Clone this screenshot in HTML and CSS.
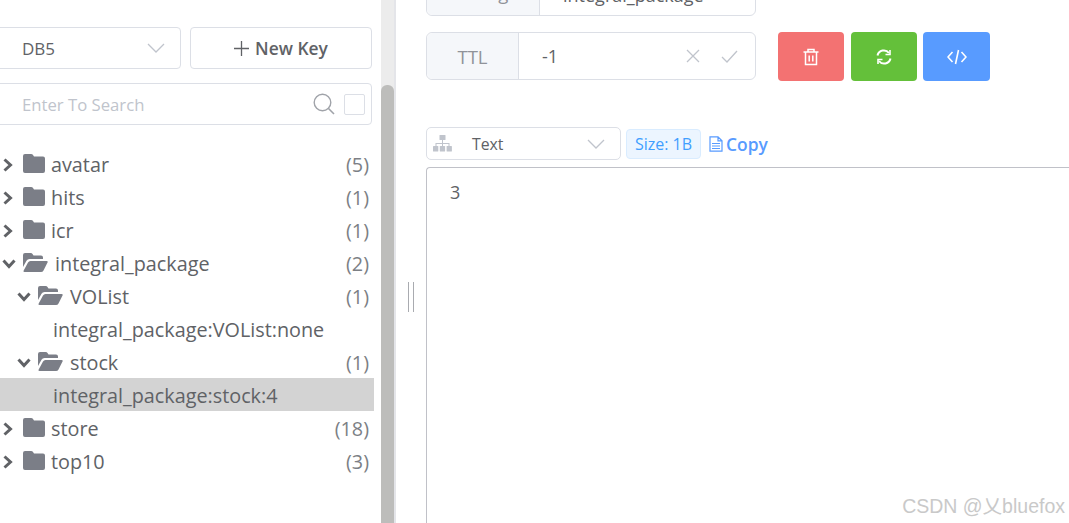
FILE: index.html
```html
<!DOCTYPE html>
<html lang="en">
<head>
  <meta charset="UTF-8">
  <title>Redis Key</title>
  <link rel="stylesheet" href="styles.css">
</head>
<body>

<svg class="icon-defs" width="0" height="0">
  <symbol id="folder" viewBox="0 0 22 19">
    <path d="M2 0h6q1.500 0 2.200 1.200l.8 1.300h9q2 0 2 2v12.500q0 2-2 2h-18q-2 0-2-2v-15q0-2 2-2z"/>
  </symbol>
  <symbol id="folder-open" viewBox="0 0 25 19">
    <path d="M0 2q0-2 2-2h5.500q1.500 0 2.200 1.200l.8 1.300h7.500q2 0 2 2v1.500h-13.500q-2 0-3 1.700l-3.500 6.300z"/>
    <path d="M6 8h17.500q1.800 0 1 1.600l-4 7.800q-.8 1.600-2.500 1.600h-16.500q-1.600 0-.8-1.500l4.300-8q.8-1.500 2.500-1.500z"/>
  </symbol>
  <symbol id="arrow-right" viewBox="0 0 12 14">
    <path d="M2.500 1.500l6 5.500-6 5.500" fill="none" stroke="currentColor" stroke-width="3"/>
  </symbol>
  <symbol id="arrow-down" viewBox="0 0 14 12">
    <path d="M1.500 2.500l5.500 6 5.500-6" fill="none" stroke="currentColor" stroke-width="3"/>
  </symbol>
  <symbol id="caret" viewBox="0 0 18 10">
    <path d="M1 1l8 8 8-8" fill="none" stroke="currentColor" stroke-width="1.300"/>
  </symbol>
</svg>

<div class="app">
  <aside class="sidebar">
    <div class="side-top">
      <div class="db-row">
        <div class="db-select">
          <span>DB5</span>
          <svg class="caret" width="18" height="10"><use href="#caret"/></svg>
        </div>
        <button class="new-key">
          <svg class="plus" width="15" height="15" viewBox="0 0 15 15">
            <path d="M7.500 0v15M0 7.500h15" stroke="currentColor" stroke-width="1.300"/>
          </svg>
          New Key
        </button>
      </div>
      <div class="search-box">
        <span class="search-hint">Enter To Search</span>
        <svg class="search-icon" width="22" height="22" viewBox="0 0 22 22">
          <circle cx="9.500" cy="9.500" r="8.300" fill="none" stroke="currentColor" stroke-width="1.400"/>
          <path d="M15.500 15.500l5.500 5.500" stroke="currentColor" stroke-width="1.600"/>
        </svg>
        <span class="checkbox"></span>
      </div>
    </div>

    <ul class="tree" id="tree"></ul>
  </aside>

  <div class="scroll-track"><div class="scroll-thumb"></div></div>

  <main class="detail">
    <div class="resizer"></div>
    <div class="panel">
      <div class="key-row">
        <div class="input-group name-group">
          <span class="prefix type-label">String</span>
          <span class="input-value name-value">integral_package</span>
        </div>
      </div>

      <div class="ttl-row">
        <div class="input-group ttl-group">
          <span class="prefix ttl-label">TTL</span>
          <span class="input-value ttl-value">-1</span>
          <svg class="ttl-icon" width="14" height="14" viewBox="0 0 14 14">
            <path d="M1 1l12 12M13 1l-12 12" stroke="currentColor" stroke-width="1.300"/>
          </svg>
          <svg class="ttl-icon ttl-check" width="17" height="13" viewBox="0 0 17 13">
            <path d="M1 7l5 5 10-11" fill="none" stroke="currentColor" stroke-width="1.300"/>
          </svg>
        </div>
        <div class="actions">
          <button class="act act-red">
            <svg width="18" height="18" viewBox="0 0 18 18" fill="none" stroke="#fff" stroke-width="1.500">
              <path d="M1.500 4h15M6 4v-2.500h6v2.500M3.500 4v12.500h11v-12.500M7.200 7.500v6M10.800 7.500v6"/>
            </svg>
          </button>
          <button class="act act-green">
            <svg width="16" height="16" viewBox="0 0 16 16" fill="none" stroke="#fff" stroke-width="2">
              <path d="M1.500 6.500a6.500 6.500 0 0 1 11.500-2.500M14.500 9.500a6.500 6.500 0 0 1-11.500 2.500"/>
              <path d="M14 1v4.500h-4.500M2 15v-4.500h4.500" stroke-width="1.600"/>
            </svg>
          </button>
          <button class="act act-blue">
            <svg width="20" height="16" viewBox="0 0 20 16" fill="none" stroke="#fff" stroke-width="1.600">
              <path d="M5.500 3l-4.500 5 4.500 5M14.500 3l4.500 5-4.500 5M11.500 1l-3 14"/>
            </svg>
          </button>
        </div>
      </div>

      <div class="format-row">
        <div class="format-select">
          <svg class="tree-icon" width="19" height="17" viewBox="0 0 19 17">
            <rect x="6.500" y="0" width="6" height="5" rx=".6"/>
            <path d="M9 5h1v3h6.500v3h-1v-2h-5.500v2h-1v-2h-5.500v2h-1v-3h6.500z"/>
            <rect x="0" y="11" width="5.300" height="5.500" rx=".6"/>
            <rect x="6.800" y="11" width="5.300" height="5.500" rx=".6"/>
            <rect x="13.600" y="11" width="5.300" height="5.500" rx=".6"/>
          </svg>
          <span class="format-name">Text</span>
          <svg class="caret" width="18" height="10"><use href="#caret"/></svg>
        </div>
        <span class="size-tag">Size: 1B</span>
        <span class="copy">
          <svg width="14" height="16" viewBox="0 0 14 16" fill="none" stroke="currentColor" stroke-width="1.200">
            <path d="M1 .8h8l4 4v10.400h-12zM9 .8v4h4M3 7.500h8M3 10h8M3 12.500h8"/>
          </svg>Copy
        </span>
      </div>

      <div class="value-box">3</div>
    </div>
  </main>
</div>

<div class="watermark">CSDN @乂bluefox</div>

<script>
  const rows = [
    { name: "avatar", count: 5, type: "closed", level: 0 },
    { name: "hits", count: 1, type: "closed", level: 0 },
    { name: "icr", count: 1, type: "closed", level: 0 },
    { name: "integral_package", count: 2, type: "open", level: 0 },
    { name: "VOList", count: 1, type: "open", level: 1 },
    { name: "integral_package:VOList:none", type: "leaf" },
    { name: "stock", count: 1, type: "open", level: 1 },
    { name: "integral_package:stock:4", type: "leaf", selected: true },
    { name: "store", count: 18, type: "closed", level: 0 },
    { name: "top10", count: 3, type: "closed", level: 0 }
  ];

  const tree = document.getElementById("tree");
  rows.forEach(item => {
    const row = document.createElement("li");
    row.className = `row row-${item.type} level-${item.level || 0}`;
    if (item.selected) row.classList.add("selected");

    if (item.type === "leaf") {
      row.innerHTML = `<span class="row-name">${item.name}</span>`;
    } else {
      const open = item.type === "open";
      row.innerHTML = `
        <svg class="${open ? "arrow-down" : "arrow-right"}"><use href="#${open ? "arrow-down" : "arrow-right"}"/></svg>
        <svg class="${open ? "folder-open" : "folder"}"><use href="#${open ? "folder-open" : "folder"}"/></svg>
        <span class="row-name">${item.name}</span>
        <span class="row-count">(${item.count})</span>
      `;
    }
    tree.appendChild(row);
  });
</script>

</body>
</html>
```

FILE: styles.css
```css
* {
  box-sizing: border-box;
}
html, body {
  margin: 0;
  height: 100%;
  overflow: hidden;
}
body {
  font-family: 'Open Sans', 'Noto Sans', sans-serif;
  color: #606266;
  background-color: #fff;
}
.icon-defs {
  position: absolute;
}
.app {
  display: flex;
  height: 523px;
  overflow: hidden;
}

/* left side */
.sidebar {
  width: 381px;
  flex: none;
  padding-top: 27px;
  overflow: hidden;
}
.side-top {
  margin-left: -10px;
  width: 382px;
}
.db-row {
  display: flex;
  gap: 9px;
}
.db-select {
  width: 191px;
  height: 42px;
  border: 1px solid #dcdfe6;
  border-radius: 4px;
  display: flex;
  align-items: center;
  justify-content: space-between;
  padding: 0 15px 0 31px;
  font-size: 17px;
}
.caret {
  color: #c0c4cc;
}
.new-key {
  width: 182px;
  height: 42px;
  background: #fff;
  border: 1px solid #dcdfe6;
  border-radius: 4px;
  color: #606266;
  font-family: inherit;
  font-size: 17.4px;
  font-weight: 600;
  padding: 0;
  display: flex;
  align-items: center;
  justify-content: center;
  gap: 6px;
}
.search-box {
  margin-top: 14px;
  height: 42px;
  border: 1px solid #dcdfe6;
  border-radius: 4px;
  display: flex;
  align-items: center;
  padding: 0 6px 0 31px;
}
.search-hint {
  flex: 1;
  font-size: 16.7px;
  color: #c0c4cc;
}
.search-icon {
  color: #a0a3a9;
  margin-right: 9px;
}
.checkbox {
  width: 21px;
  height: 21px;
  border: 1px solid #dcdfe6;
  border-radius: 2px;
}

.tree {
  list-style: none;
  margin: 23px 0 0;
  padding: 0;
}
.row {
  height: 33px;
  width: 374px;
  display: flex;
  align-items: center;
  font-size: 19.8px;
  line-height: 33px;
  color: #606266;
}
.row.selected {
  background-color: #d3d3d3;
  margin: -1px 0 1px;
  padding-top: 2px;
}
.row-leaf {
  padding-left: 53px;
}
.row-count {
  margin-left: auto;
  margin-right: 5px;
  color: #7c7f85;
}
.arrow-right {
  width: 12px;
  height: 14px;
  margin-left: 2px;
  color: #606266;
  flex: none;
}
.arrow-down {
  width: 14px;
  height: 12px;
  margin-left: 2px;
  color: #606266;
  flex: none;
}
.folder {
  width: 22px;
  height: 19px;
  margin-left: 9px;
  margin-right: 6px;
  margin-top: -3px;
  fill: #7b7e87;
  flex: none;
}
.folder-open {
  width: 25px;
  height: 19px;
  margin-left: 7px;
  margin-right: 7px;
  margin-top: -3px;
  fill: #7b7e87;
  flex: none;
}
.level-1 {
  padding-left: 15px;
}

/* scrollbar */
.scroll-track {
  width: 13px;
  flex: none;
  background-color: #ececec;
  padding-top: 85px;
}
.scroll-thumb {
  height: 100%;
  background-color: #bdbdbb;
  border-radius: 6px 6px 0 0;
}

/* right side */
.detail {
  flex: 1;
  min-width: 0;
  display: flex;
  border-left: 2px solid #e4e5e9;
}
.resizer {
  width: 6px;
  height: 30px;
  margin: 282px 0 0 12px;
  border-left: 1px solid #a9abb0;
  border-right: 1px solid #a9abb0;
  flex: none;
}
.panel {
  flex: 1;
  min-width: 0;
  padding-left: 12px;
  overflow: hidden;
}
.key-row {
  height: 32px;
  display: flex;
  align-items: flex-end;
  overflow: hidden;
}
.input-group {
  width: 330px;
  display: flex;
  align-items: center;
  border: 1px solid #dcdfe6;
  border-radius: 6px;
  background: #fff;
  flex: none;
}
.name-group {
  height: 48px;
  margin-bottom: 16px;
  flex: none;
}
.prefix {
  height: 100%;
  background-color: #f5f7fa;
  border-right: 1px solid #dcdfe6;
  display: flex;
  align-items: center;
  justify-content: center;
  color: #909399;
  font-size: 18.6px;
  flex: none;
  border-radius: 6px 0 0 6px;
}
.type-label {
  width: 113px;
}
.ttl-label {
  width: 92px;
}
.input-value {
  padding-left: 23px;
  font-size: 18px;
  color: #606266;
}
.name-value {
  padding-top: 6px;
}
.ttl-row {
  display: flex;
  gap: 22px;
}
.ttl-group {
  height: 48px;
}
.ttl-value {
  flex: 1;
}
.ttl-icon {
  color: #c0c4cc;
  margin-right: 21px;
}
.ttl-check {
  margin-right: 17px;
}
.actions {
  display: flex;
  gap: 7px;
}
.act {
  width: 66px;
  height: 49px;
  border: none;
  border-radius: 4px;
  display: flex;
  align-items: center;
  justify-content: center;
  padding: 0;
}
.act-red {
  background-color: #f37272;
}
.act-green {
  background-color: #64c03a;
}
.act-blue {
  background-color: #589bff;
  width: 67px;
  margin-left: -1px;
}
.format-row {
  display: flex;
  align-items: center;
  margin-top: 46px;
  height: 33px;
}
.format-select {
  width: 195px;
  height: 33px;
  border: 1px solid #dcdfe6;
  border-radius: 5px;
  display: flex;
  align-items: center;
  padding: 0 15px 0 6px;
  font-size: 15.8px;
}
.tree-icon {
  fill: #c0c4cc;
  flex: none;
}
.format-name {
  flex: 1;
  margin-left: 20px;
}
.size-tag {
  width: 75px;
  height: 30px;
  margin-left: 5px;
  background-color: #ecf5ff;
  border: 1px solid #d9ecff;
  border-radius: 4px;
  color: #409eff;
  font-size: 16px;
  display: flex;
  align-items: center;
  justify-content: center;
}
.copy {
  margin-left: 8px;
  color: #589bff;
  font-size: 17.4px;
  font-weight: 600;
  display: flex;
  align-items: center;
  gap: 3px;
}
.value-box {
  margin-top: 7px;
  height: 356px;
  border: 1px solid #c0c1c8;
  border-right: none;
  border-bottom: none;
  border-radius: 4px 0 0 0;
  padding: 12px 0 0 23px;
  font-size: 18px;
  color: #606266;
}

.watermark {
  position: absolute;
  right: 4px;
  bottom: 4px;
  font-family: 'Liberation Sans', 'Noto Sans CJK SC', sans-serif;
  font-size: 19.5px;
  color: #c9c9c9;
}
```
